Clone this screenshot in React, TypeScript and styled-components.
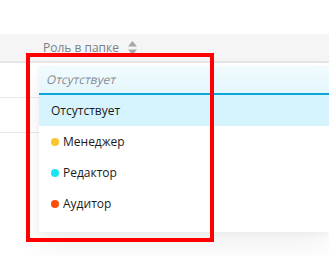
import React from 'react';
import styled, { createGlobalStyle } from 'styled-components';

const GlobalStyle = createGlobalStyle`
  html, body {
    margin: 0;
    padding: 0;
    background: #ffffff;
  }

  body {
    font-family: 'Open Sans', 'Noto Sans', sans-serif;
  }
`;

const Page = styled.div`
  position: relative;
  width: 329px;
  height: 256px;
  overflow: hidden;
  background: #ffffff;
`;

const Table = styled.div`
  padding-top: 34px;
`;

const HeaderRow = styled.div`
  display: flex;
  align-items: center;
  height: 27px;
  padding-left: 43px;
  background: #f5f5f5;
  border-bottom: 2px solid #e6e6e6;
`;

const HeaderTitle = styled.span`
  font-size: 12px;
  color: #78828c;
  margin-right: 9px;
`;

const SortIcon = styled.svg`
  width: 9px;
  height: 14px;
  display: block;
`;

const BodyRow = styled.div`
  height: 34px;
  border-bottom: 1px solid #e9e9e9;
`;

const Dropdown = styled.div`
  position: absolute;
  left: 39px;
  top: 66px;
  right: 0;
  height: 166px;
  background: #ffffff;
  box-shadow: 0 14px 28px rgba(0, 0, 0, 0.06), 0 2px 6px rgba(0, 0, 0, 0.04);
`;

const Search = styled.div`
  display: flex;
  align-items: center;
  height: 27px;
  padding-left: 8px;
  background: linear-gradient(#f1fbfe, #e4f7fd);
  border-bottom: 2px solid #0ea5db;
`;

const Placeholder = styled.span`
  display: inline-block;
  font-size: 12px;
  color: #858c94;
  transform: skewX(-12deg);
`;

const List = styled.ul`
  list-style: none;
  margin: 0;
  padding: 0;
`;

const Item = styled.li<{ $selected?: boolean }>`
  display: flex;
  align-items: center;
  height: 31px;
  padding-left: 12px;
  font-size: 12px;
  color: #1a1a1a;
  background: ${(p) => (p.$selected ? '#d6f4fd' : 'transparent')};
`;

const Dot = styled.span<{ $color: string }>`
  width: 8px;
  height: 8px;
  border-radius: 50%;
  margin-right: 4px;
  background: ${(p) => p.$color};
`;

const Highlight = styled.div`
  position: absolute;
  left: 26px;
  top: 53px;
  width: 188px;
  height: 189px;
  box-sizing: border-box;
  border: 4px solid #ff0000;
  pointer-events: none;
`;

const roles = [
  { name: 'Менеджер', color: '#fcc42d' },
  { name: 'Редактор', color: '#17e6f2' },
  { name: 'Аудитор', color: '#fb4e0b' },
];

export default function App() {
  return (
    <Page>
      <GlobalStyle />
      <Table>
        <HeaderRow>
          <HeaderTitle>Роль в папке</HeaderTitle>
          <SortIcon viewBox="0 0 9 14">
            <path d="M4.5 0 L9 5.5 H0 Z" fill="#a3a8ad" />
            <path d="M4.5 14 L9 8.5 H0 Z" fill="#a3a8ad" />
          </SortIcon>
        </HeaderRow>
        <BodyRow />
        <BodyRow />
      </Table>
      <Dropdown>
        <Search>
          <Placeholder>Отсутствует</Placeholder>
        </Search>
        <List>
          <Item $selected>Отсутствует</Item>
          {roles.map((r) => (
            <Item key={r.name}>
              <Dot $color={r.color} />
              {r.name}
            </Item>
          ))}
        </List>
      </Dropdown>
      <Highlight />
    </Page>
  );
}
